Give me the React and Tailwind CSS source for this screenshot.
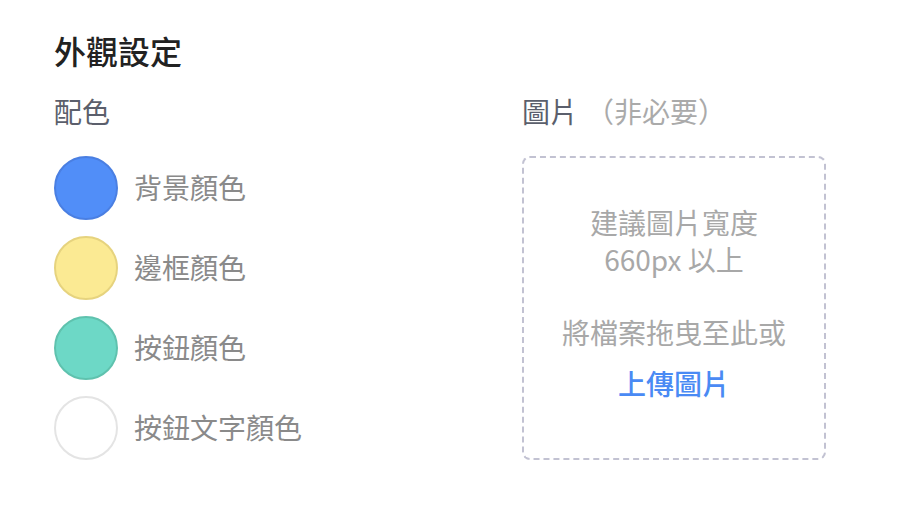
import React from 'react';

const colors = [
    { label: '背景顏色', fill: 'bg-[#518ef8]', ring: 'border-[#4a7fe2]' },
    { label: '邊框顏色', fill: 'bg-[#fbea93]', ring: 'border-[#e6d37e]' },
    { label: '按鈕顏色', fill: 'bg-[#6dd8c6]', ring: 'border-[#5fc2ae]' },
    { label: '按鈕文字顏色', fill: 'bg-white', ring: 'border-[#e4e4e4]' },
];

export default function App() {
    return (
        <div className="min-h-screen bg-white pt-[30px] pl-[54px] font-['Noto_Sans_CJK_TC','Noto_Sans',sans-serif]">
            <h1 className="text-[32px] leading-[40px] font-medium text-[#222]">外觀設定</h1>

            <div className="flex mt-[23px]">
                {/* Colour pickers */}
                <div className="w-[468px]">
                    <h2 className="text-[28px] leading-[36px] text-[#5b5f6c]">配色</h2>
                    <div className="mt-[27px] flex flex-col gap-4">
                        {colors.map((c) => (
                            <div key={c.label} className="flex items-center gap-[16px]">
                                <div className={`w-16 h-16 rounded-full border-2 ${c.fill} ${c.ring}`} />
                                <span className="-mt-[2px] text-[28px] leading-[36px] text-[#8a8a8a]">{c.label}</span>
                            </div>
                        ))}
                    </div>
                </div>

                {/* Image upload */}
                <div>
                    <h2 className="text-[28px] leading-[36px] text-[#5b5f6c]">
                        圖片<span className="ml-2 text-[#aaaaaa]">（非必要）</span>
                    </h2>
                    <div className="mt-[27px] w-[304px] h-[304px] pb-[10px] rounded-lg border-2 border-dashed border-[#c2c2d2] flex flex-col items-center justify-center text-center">
                        <p className="text-[28px] leading-[37px] text-[#a8a8a8]">
                            建議圖片寬度<br />660px 以上
                        </p>
                        <p className="mt-[36px] text-[28px] leading-[37px] text-[#a8a8a8]">將檔案拖曳至此或</p>
                        <button className="mt-[14px] text-[28px] leading-[37px] font-medium text-[#4a8af4]">上傳圖片</button>
                    </div>
                </div>
            </div>
        </div>
    );
}
